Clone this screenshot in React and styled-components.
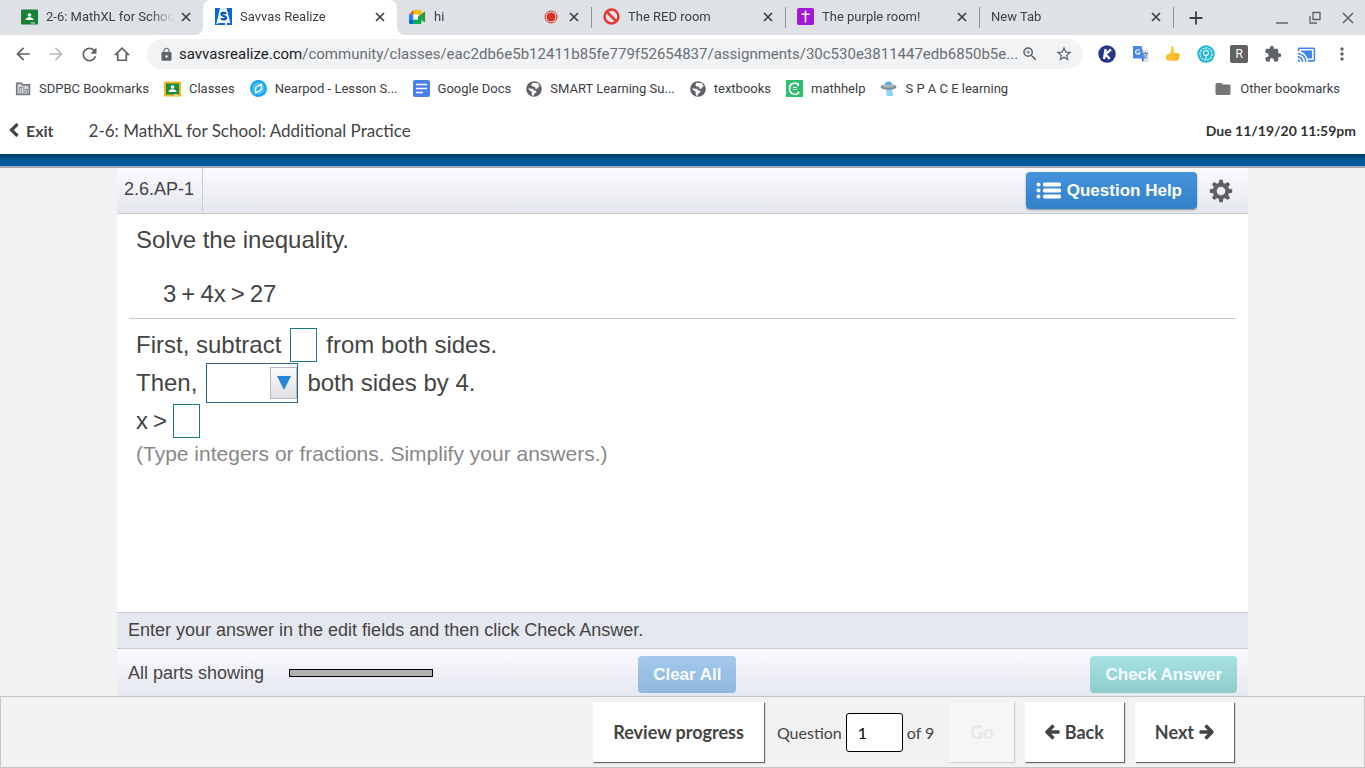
import React from "react";
// Style
import styled, { createGlobalStyle, css } from "styled-components";
// Icons
import {
  MdAdd,
  MdArrowBack,
  MdArrowForward,
  MdCastConnected,
  MdExtension,
  MdFolder,
  MdLock,
  MdMoreVert,
  MdRefresh,
  MdStarBorder,
  MdZoomIn,
} from "react-icons/md";

// Favicons
const ClassroomIcon = ({ frame = "#188038", board = "#188038" }) => (
  <svg width="17" height="16" viewBox="0 0 17 16" aria-hidden="true">
    <rect width="17" height="15" y="0.5" rx="1" fill={frame} />
    <rect x="2" y="2.5" width="13" height="11" fill={board} />
    <circle cx="8.5" cy="6" r="1.8" fill="#fff" />
    <path d="M4.5 11c0-2 2-2.8 4-2.8s4 .8 4 2.8z" fill="#fff" />
    <path d="M10 13.500h4v1h-4z" fill="#e8eaed" />
  </svg>
);

const SavvasIcon = () => (
  <svg width="17" height="17" viewBox="0 0 17 17" aria-hidden="true">
    <rect width="17" height="17" fill="#0b66d0" />
    <path d="M5 0h6.500l4 15H12v2H1z" fill="#e9f2fd" />
    <path d="M0 17l4-2h6v2z" fill="#0b66d0" />
    <path
      d="M11 5.800C9.600 4.500 6.400 4.600 6.500 6.500c.2 1.800 4.600 1.300 4.600 3.300 0 1.900-3.400 2.100-5.200.7"
      fill="none"
      stroke="#0a4fb0"
      strokeWidth="2.200"
    />
  </svg>
);

const MeetIcon = () => (
  <svg width="17" height="14" viewBox="0 0 17 14" aria-hidden="true">
    <path d="M4.500 0v4.500H0z" fill="#ea4335" />
    <path d="M0 4.500h4.500v5H0z" fill="#2684fc" />
    <path d="M0 9.500h4.500V14H1.500A1.500 1.500 0 0 1 0 12.500z" fill="#0066da" />
    <path d="M4.500 0H11a1.500 1.500 0 0 1 1.500 1.500V7L9 5V4.500H4.500z" fill="#ffba00" />
    <path d="M4.500 9.500H9V7l3.500-2v7.500A1.500 1.500 0 0 1 11 14H4.500z" fill="#00ac47" />
    <path d="M9 7l6.200-5.200c.4-.3.900 0 .9.500v9.400c0 .5-.5.800-.9.500z" fill="#2a9a45" />
    <path d="M4.500 4.500H9v5H4.500z" fill="#fff" />
  </svg>
);

const RecordIcon = () => (
  <svg width="22" height="14" viewBox="0 0 14 14" aria-hidden="true">
    <circle cx="7" cy="7" r="6" fill="none" stroke="#d93025" strokeWidth="1" />
    <circle cx="7" cy="7" r="4.500" fill="#d93025" />
  </svg>
);

const BannedIcon = () => (
  <svg width="17" height="17" viewBox="0 0 17 17" aria-hidden="true">
    <circle cx="8.500" cy="8.500" r="7" fill="#e8e0e2" stroke="#e53935" strokeWidth="2.500" />
    <path d="M3.500 3.500l10 10" stroke="#e53935" strokeWidth="2.500" />
  </svg>
);

const CrossIcon = () => (
  <svg width="17" height="17" viewBox="0 0 17 17" aria-hidden="true">
    <rect width="17" height="17" rx="2" fill="#a317d6" />
    <path d="M8.500 2.500v12M4.500 6.300h8" stroke="#fff" strokeWidth="1.600" />
  </svg>
);

const DistrictIcon = () => (
  <svg width="16" height="14" viewBox="0 0 16 14" aria-hidden="true">
    <path d="M1.700 1.200h4.500l1.500 1.700h6.800v9.600H1.700z" fill="#d0d2d5" stroke="#74777b" strokeWidth="1.600" />
    <path d="M4 5h4.500v6.500H4zM9.500 7H13v4.500H9.500z" fill="#8b8f93" />
    <path d="M5.300 6v5M7.300 6v5M11.200 8v3" stroke="#fff" strokeWidth=".8" />
  </svg>
);

const NearpodIcon = () => (
  <svg width="17" height="17" viewBox="0 0 17 17" aria-hidden="true">
    <circle cx="8.500" cy="8.500" r="8.500" fill="#16a8f0" />
    <circle cx="8.500" cy="8.500" r="6" fill="#4cc0f8" />
    <path
      d="M5.800 7.300L11.500 4l-.3 5.700-5.700 3.300z"
      fill="#2bb1f3"
      stroke="#fff"
      strokeWidth="1.300"
      strokeLinejoin="round"
    />
  </svg>
);

const DocsIcon = () => (
  <svg width="17" height="17" viewBox="0 0 17 17" aria-hidden="true">
    <rect width="17" height="17" rx="2" fill="#4a80ee" />
    <path d="M3 4.500h11M3 8.500h11M3 12.500h7" stroke="#fff" strokeWidth="1.700" />
  </svg>
);

const GlobeIcon = () => (
  <svg width="16" height="16" viewBox="0 0 16 16" aria-hidden="true">
    <circle cx="8" cy="8" r="7.800" fill="#5f6368" />
    <path d="M6.500 1.800L12 2.200l1.800 3.300-1.300.3-1 1.900-2.300-.3-.4-1.600-2.300-.2L5.300 4z" fill="#fff" />
    <path d="M1.700 7.500l5 .3 1.800 1.600 1.900.4-.2 1.700-1.800 1-.8 2.200-1.700-.3-.2-3.300z" fill="#fff" />
  </svg>
);

const MathHelpIcon = () => (
  <svg width="17" height="17" viewBox="0 0 17 17" aria-hidden="true">
    <rect width="17" height="17" fill="#2fc06e" />
    <path d="M12.500 5.500C11 1.800 3.500 2.500 3.500 8.500s7 7.500 9.700 3.500" fill="none" stroke="#fff" strokeWidth="1.700" />
    <path d="M7 7h4v1H7zM7 9h4v1H7zM12 3h1v3h-1z" fill="#fff" />
  </svg>
);

const SaucerIcon = () => (
  <svg width="17" height="16" viewBox="0 0 17 16" aria-hidden="true">
    <path d="M6 8h6l1 7H6.500z" fill="#8fd3f4" />
    <ellipse cx="8.500" cy="3.500" rx="3.500" ry="3" fill="#4fb3e0" />
    <ellipse cx="8.500" cy="6" rx="8" ry="2.700" fill="#7d8f99" />
    <ellipse cx="8.500" cy="5" rx="5.500" ry="1.500" fill="#a9bac4" />
  </svg>
);

// Extension icons
const KIcon = () => (
  <svg width="18" height="18" viewBox="0 0 18 18" aria-hidden="true">
    <circle cx="9" cy="9" r="8.700" fill="#26358c" />
    <path d="M7.700 4L6 14M13 4.300L7.500 9.500l4.300 4.300" fill="none" stroke="#fff" strokeWidth="2.400" />
  </svg>
);

const TranslateIcon = () => (
  <svg width="18" height="18" viewBox="0 0 18 18" aria-hidden="true">
    <path d="M8 5h8.500v12H11z" fill="#dfe3e8" />
    <path d="M1 1h8.500l3 12.500H1z" fill="#4a86e8" />
    <path d="M10.500 17l2-3.500H9.500z" fill="#3367d6" />
    <path d="M7.700 5.500a2.300 2.300 0 1 0 .3 2.500H5.800" fill="none" stroke="#fff" strokeWidth="1.100" />
    <path
      d="M11 8.500h5M13.500 7v1.500M15 8.500c-.4 2-1.600 3.500-3 4.500M12 10c.8 1.600 2 2.500 3.500 3"
      fill="none"
      stroke="#607d8b"
      strokeWidth="1"
    />
  </svg>
);

const ThumbIcon = () => (
  <svg width="16" height="18" viewBox="0 0 16 18" aria-hidden="true">
    <path
      d="M6.500 1.500c1.500-.6 2.400.5 2.300 2.200L8.600 8h4.600c1.200 0 1.700 1 1.300 1.900.4.700.3 1.400-.4 1.900.2.900-.1 1.400-.7 1.800.1 1.400-.6 2.100-1.800 2.100H5L1.500 15.200c-.8-1.500-.8-3.700 0-5.200 2.500-1 4.500-2.500 4.700-4.500z"
      fill="#fcc02e"
    />
    <path d="M10 10.300h4.200M10 12.700h3.800M10 15h3" stroke="#f0a01c" strokeWidth=".9" />
  </svg>
);

const RingsIcon = () => (
  <svg width="18" height="18" viewBox="0 0 18 18" aria-hidden="true">
    <circle cx="9" cy="9" r="8.700" fill="#1fb6d0" />
    <circle cx="9" cy="9" r="6" fill="none" stroke="#e4fafd" strokeWidth="1.300" strokeDasharray="2 1" />
    <circle cx="9" cy="8" r="2.500" fill="none" stroke="#e4fafd" strokeWidth="1.200" />
    <path d="M9 10v4" fill="none" stroke="#e4fafd" strokeWidth="1.200" />
  </svg>
);

const CloseIcon = () => (
  <svg width="16" height="16" viewBox="0 0 16 16" aria-hidden="true">
    <path d="M4 4l8 8M12 4l-8 8" stroke="currentColor" strokeWidth="1.700" />
  </svg>
);

const GearIcon = () => (
  <svg width="24" height="24" viewBox="0 0 24 24" aria-hidden="true">
    <g fill="#5f6063">
      {[0, 45, 90, 135, 180, 225, 270, 315].map((angle) => (
        <path key={angle} d="M10.300 0.800h3.400l.8 4.500H9.500z" transform={`rotate(${angle} 12 12)`} />
      ))}
    </g>
    <circle cx="12" cy="12" r="6.300" fill="none" stroke="#5f6063" strokeWidth="4" />
  </svg>
);

const ListIcon = () => (
  <svg width="26" height="17" viewBox="0 0 26 17" aria-hidden="true">
    <g fill="#fff">
      {[0, 6, 12].map((y) => (
        <React.Fragment key={y}>
          <circle cx="2.500" cy={y + 2.5} r="2" />
          <rect x="7" y={y + 0.5} width="18" height="4" rx="1.500" />
        </React.Fragment>
      ))}
    </g>
  </svg>
);

const ArrowIcon = ({ right }) => (
  <svg width="16" height="18" viewBox="0 0 16 18" aria-hidden="true">
    <path
      d={right ? "M1.500 9h12M7.500 2.500L14 9l-6.500 6.500" : "M14.500 9h-12M8.500 2.500L2 9l6.500 6.500"}
      fill="none"
      stroke="#444"
      strokeWidth="3.500"
      strokeLinejoin="round"
    />
  </svg>
);

// Data
const tabs = [
  { title: "2-6: MathXL for School", icon: <ClassroomIcon /> },
  { title: "Savvas Realize", icon: <SavvasIcon />, active: true },
  { title: "hi", icon: <MeetIcon />, recording: true },
  { title: "The RED room", icon: <BannedIcon />, divider: true },
  { title: "The purple room!", icon: <CrossIcon />, divider: true },
  { title: "New Tab", divider: true },
];

const bookmarks = [
  { name: "SDPBC Bookmarks", icon: <DistrictIcon /> },
  { name: "Classes", icon: <ClassroomIcon frame="#f2b91d" board="#1e8e3e" /> },
  { name: "Nearpod - Lesson S...", icon: <NearpodIcon /> },
  { name: "Google Docs", icon: <DocsIcon /> },
  { name: "SMART Learning Su...", icon: <GlobeIcon /> },
  { name: "textbooks", icon: <GlobeIcon /> },
  { name: "mathhelp", icon: <MathHelpIcon /> },
  { name: "S P A C E learning", icon: <SaucerIcon /> },
];

const Browser = () => (
  <BrowserChrome>
    <TabStrip>
      {tabs.map((tab) => (
        <Tab key={tab.title} $active={tab.active} $divider={tab.divider}>
          {tab.icon}
          <TabTitle $first={!tab.icon}>{tab.title}</TabTitle>
          {tab.recording && <RecordIcon />}
          <IconButton $size={16} $color="#3c4043" aria-label="Close tab">
            <CloseIcon />
          </IconButton>
        </Tab>
      ))}
      <NewTab>
        <IconButton $size={20} $color="#3c4043" aria-label="New tab">
          <MdAdd size={22} />
        </IconButton>
      </NewTab>
      <WindowControls>
        <IconButton $size={16} aria-label="Minimize">
          <svg width="14" height="14" viewBox="0 0 14 14">
            <path d="M1 12h12" stroke="#5f6368" strokeWidth="1.500" />
          </svg>
        </IconButton>
        <IconButton $size={16} aria-label="Restore">
          <svg width="14" height="14" viewBox="0 0 14 14" fill="none" stroke="#5f6368" strokeWidth="1.300">
            <path d="M5 1.500h7v7H5zM2 5v7h7" />
          </svg>
        </IconButton>
        <IconButton $size={16} aria-label="Close">
          <svg width="14" height="14" viewBox="0 0 14 14">
            <path d="M2 2l10 10M12 2L2 12" stroke="#5f6368" strokeWidth="1.500" />
          </svg>
        </IconButton>
      </WindowControls>
    </TabStrip>
    <Toolbar>
      <NavButtons>
        <IconButton $size={20} aria-label="Back">
          <MdArrowBack size={20} />
        </IconButton>
        <IconButton $size={20} $color="#babcbe" aria-label="Forward">
          <MdArrowForward size={20} />
        </IconButton>
        <IconButton $size={20} aria-label="Reload">
          <MdRefresh size={21} />
        </IconButton>
        <IconButton $size={20} aria-label="Home">
          <svg width="16" height="16" viewBox="0 0 18 18" fill="none" stroke="#5f6368" strokeWidth="1.900">
            <path d="M2 9.500l7-7 7 7h-2.200V16H4.200V9.500z" />
          </svg>
        </IconButton>
      </NavButtons>
      <AddressBar>
        <IconButton $size={22} aria-label="View site information">
          <MdLock size={15} />
        </IconButton>
        <Address>
          <b>savvasrealize.com</b>
          /community/classes/eac2db6e5b12411b85fe779f52654837/assignments/30c530e3811447edb6850b5e...
        </Address>
        <AddressActions>
          <IconButton $size={18} aria-label="Zoom">
            <MdZoomIn size={18} />
          </IconButton>
          <IconButton $size={18} aria-label="Bookmark this page">
            <MdStarBorder size={18} />
          </IconButton>
        </AddressActions>
      </AddressBar>
      <Extensions>
        <KIcon />
        <TranslateIcon />
        <ThumbIcon />
        <RingsIcon />
        <LetterBadge>R</LetterBadge>
        <MdExtension size={18} />
        <MdCastConnected size={19} color="#4285f4" />
        <MdMoreVert size={20} />
      </Extensions>
    </Toolbar>
    <Bookmarks>
      {bookmarks.map((bookmark) => (
        <Bookmark key={bookmark.name} href="#">
          {bookmark.icon}
          {bookmark.name}
        </Bookmark>
      ))}
      <Bookmark href="#" $last>
        <MdFolder size={18} />
        Other bookmarks
      </Bookmark>
    </Bookmarks>
  </BrowserChrome>
);

const Exercise = () => (
  <Panel>
    <PanelHeader>
      <ExerciseId>2.6.AP-1</ExerciseId>
      <HelpButton>
        <ListIcon />
        Question Help
      </HelpButton>
      <IconButton $size={24} aria-label="Settings">
        <GearIcon />
      </IconButton>
    </PanelHeader>
    <Problem>
      <p>Solve the inequality.</p>
      <Equation>
        <span>3</span>
        <span>+</span>
        <span>4x</span>
        <span>&gt;</span>
        <span>27</span>
      </Equation>
    </Problem>
    <Steps>
      <Step>
        <label htmlFor="subtract">First, subtract</label>
        <AnswerBox id="subtract" />
        <span>from both sides.</span>
      </Step>
      <Step>
        <label htmlFor="operation">Then,</label>
        <SelectWrap>
          <select id="operation" defaultValue="">
            <option value=""></option>
            <option value="divide">divide</option>
            <option value="multiply">multiply</option>
          </select>
          <SelectArrow>
            <svg width="14" height="14" viewBox="0 0 14 14">
              <path d="M0 0h14L7 14z" fill="#2585d6" />
            </svg>
          </SelectArrow>
        </SelectWrap>
        <span>both sides by 4.</span>
      </Step>
      <Step $tight>
        <Inequality htmlFor="solution">
          <span>x</span>
          <span>&gt;</span>
        </Inequality>
        <AnswerBox id="solution" />
      </Step>
      <Hint>(Type integers or fractions. Simplify your answers.)</Hint>
    </Steps>
    <Instruction>Enter your answer in the edit fields and then click Check Answer.</Instruction>
    <PanelFooter>
      <Parts>
        All parts showing
        <Progress />
      </Parts>
      <ActionButton>Clear All</ActionButton>
      <ActionButton $teal>Check Answer</ActionButton>
    </PanelFooter>
  </Panel>
);

const App = () => (
  <Page>
    <GlobalStyle />
    <Browser />
    <AssignmentHeader>
      <ExitLink href="#">
        <svg width="10" height="14" viewBox="0 0 10 14" aria-hidden="true">
          <path d="M8.500 1L2.500 7l6 6" fill="none" stroke="#444" strokeWidth="3.200" />
        </svg>
        Exit
      </ExitLink>
      <AssignmentTitle>2-6: MathXL for School: Additional Practice</AssignmentTitle>
      <DueDate>Due 11/19/20 11:59pm</DueDate>
    </AssignmentHeader>
    <BlueBar />
    <Exercise />
    <Pager>
      <PagerButton>Review progress</PagerButton>
      <PageSelect>
        <label htmlFor="question">Question</label>
        <input id="question" defaultValue="1" />
        <span>of 9</span>
      </PageSelect>
      <PagerButton disabled>Go</PagerButton>
      <PagerButton>
        <ArrowIcon />
        Back
      </PagerButton>
      <PagerButton>
        Next
        <ArrowIcon right />
      </PagerButton>
    </Pager>
  </Page>
);

const GlobalStyle = createGlobalStyle`
  * {
    box-sizing: border-box;
    margin: 0;
    padding: 0;
  }
  body {
    background: #f2f2f2;
    font-family: "Liberation Sans", Arial, sans-serif;
    color: #444;
  }
  button, input, select {
    font-family: inherit;
  }
  svg {
    flex-shrink: 0;
  }
`;

const Page = styled.div`
  display: flex;
  flex-direction: column;
  min-height: 100vh;
`;

const IconButton = styled.button`
  display: flex;
  align-items: center;
  justify-content: center;
  flex-shrink: 0;
  width: ${(props) => props.$size}px;
  height: ${(props) => props.$size}px;
  border: none;
  background: transparent;
  color: ${(props) => props.$color || "#5f6368"};
  cursor: pointer;
`;

const BrowserChrome = styled.div`
  background: #fff;
  font-family: Roboto, sans-serif;
  color: #5f6368;
`;

const TabStrip = styled.div`
  display: flex;
  height: 35px;
  padding-left: 9px;
  background: #dee1e6;
`;

const activeTab = css`
  background: #fff;

  &::before,
  &::after {
    content: "";
    position: absolute;
    bottom: 0;
    width: 8px;
    height: 8px;
  }
  &::before {
    left: -8px;
    background: radial-gradient(circle at 0 0, transparent 8px, #fff 8px);
  }
  &::after {
    right: -8px;
    background: radial-gradient(circle at 100% 0, transparent 8px, #fff 8px);
  }
`;

const tabDivider = css`
  &::before {
    content: "";
    position: absolute;
    left: 0;
    top: 7px;
    width: 1px;
    height: 21px;
    background: #8f9398;
  }
`;

const Tab = styled.div`
  display: flex;
  align-items: center;
  gap: 4px;
  flex: 0 1 194px;
  min-width: 0;
  padding: 0 9px 2px 12px;
  position: relative;
  border-radius: 8px 8px 0 0;
  ${(props) => props.$active && activeTab}
  ${(props) => props.$divider && tabDivider}
`;

const TabTitle = styled.span`
  flex: 1;
  min-width: 0;
  margin-left: ${(props) => (props.$first ? "0" : "4px")};
  overflow: hidden;
  white-space: nowrap;
  font-size: 13px;
  color: #3c4043;
  mask-image: linear-gradient(to left, transparent, #000 24px);
`;

const NewTab = styled.div`
  display: flex;
  align-items: center;
  height: 21px;
  margin-top: 7px;
  padding-left: 12px;
  border-left: 1px solid #8f9398;
`;

const WindowControls = styled.div`
  display: flex;
  align-items: center;
  gap: 17px;
  margin-left: auto;
  padding-right: 9px;
`;

const Toolbar = styled.div`
  display: flex;
  align-items: center;
  height: 38px;
  padding: 0 13px;
`;

const NavButtons = styled.div`
  display: flex;
  gap: 13px;
  margin-right: 15px;
`;

const AddressBar = styled.div`
  display: flex;
  align-items: center;
  flex: 1;
  gap: 2px;
  min-width: 0;
  height: 30px;
  padding: 0 10px 0 8px;
  border-radius: 15px;
  background: #f1f3f4;
`;

const Address = styled.span`
  flex: 1;
  min-width: 0;
  overflow: hidden;
  white-space: nowrap;
  font-size: 15px;
  color: #6b6f74;

  b {
    font-weight: 400;
    color: #202124;
  }
`;

const AddressActions = styled.div`
  display: flex;
  gap: 16px;
`;

const Extensions = styled.div`
  display: flex;
  align-items: center;
  justify-content: space-between;
  width: 254px;
  margin-left: 15px;
`;

const LetterBadge = styled.span`
  width: 18px;
  height: 18px;
  border-radius: 2px;
  background: #616161;
  color: #fff;
  font-size: 12px;
  line-height: 18px;
  text-align: center;
`;

const Bookmarks = styled.div`
  display: flex;
  align-items: center;
  gap: 15px;
  height: 31px;
  padding: 0 25px 0 15px;
`;

const Bookmark = styled.a`
  display: flex;
  align-items: center;
  gap: 8px;
  margin-left: ${(props) => (props.$last ? "auto" : "0")};
  font-size: 13px;
  white-space: nowrap;
  text-decoration: none;
  color: #3c4043;

  svg {
    color: #757575;
  }
`;

const AssignmentHeader = styled.header`
  display: flex;
  align-items: center;
  height: 50px;
  padding: 2px 9px 0;
  background: #fff;
  font-family: Lato, sans-serif;
`;

const ExitLink = styled.a`
  display: flex;
  align-items: center;
  gap: 7px;
  margin-right: 35px;
  font-size: 16px;
  font-weight: 700;
  text-decoration: none;
  color: #444;
`;

const AssignmentTitle = styled.h1`
  font-size: 17px;
  font-weight: 400;
`;

const DueDate = styled.span`
  margin-left: auto;
  font-size: 14px;
  font-weight: 700;
  color: #333;
`;

const BlueBar = styled.div`
  height: 14px;
  border-bottom: 2px solid #a5a9ae;
  background: linear-gradient(#003c60, #005a9c 50%);
`;

const Panel = styled.main`
  display: flex;
  flex-direction: column;
  flex: 1;
  margin: 0 117px;
  background: #fff;
`;

const PanelHeader = styled.div`
  display: flex;
  align-items: center;
  height: 46px;
  padding-right: 15px;
  border-bottom: 1px solid #c9cbd1;
  background: linear-gradient(#fafaff, #e6e8ef);
`;

const ExerciseId = styled.h2`
  align-self: flex-start;
  padding: 0 8px 0 7px;
  border-right: 1px solid #c9cbd1;
  font-size: 18px;
  font-weight: 400;
  line-height: 43px;
`;

const HelpButton = styled.button`
  display: flex;
  align-items: center;
  gap: 5px;
  height: 37px;
  margin: 0 12px 0 auto;
  padding: 0 15px 0 10px;
  border: none;
  border-radius: 4px;
  background: linear-gradient(#4593dc, #3280c8);
  box-shadow: 0 1px 2px rgba(0, 0, 0, 0.4);
  color: #fff;
  font-size: 17px;
  font-weight: 700;
`;

const Problem = styled.section`
  margin: 0 12px;
  padding: 11px 7px 9px;
  border-bottom: 1px solid #c8c8c8;
  font-size: 24px;
  line-height: 30px;
`;

const Equation = styled.p`
  display: flex;
  gap: 5px;
  margin-top: 24px;
  padding-left: 27px;
`;

const Steps = styled.section`
  display: flex;
  flex-direction: column;
  gap: 1px;
  flex: 1;
  padding: 9px 19px;
`;

const Step = styled.div`
  display: flex;
  align-items: center;
  gap: ${(props) => (props.$tight ? "6px" : "9px")};
  font-size: 24px;
  line-height: 30px;
`;

const AnswerBox = styled.input`
  width: 27px;
  height: 34px;
  border: 1px solid #1c7a80;
  background: #fff;
  font-size: 20px;
  text-align: center;
`;

const SelectWrap = styled.div`
  position: relative;

  select {
    display: block;
    width: 92px;
    height: 40px;
    padding-left: 6px;
    border: 1px solid #2f6290;
    border-radius: 0;
    background: #fff;
    appearance: none;
    font-size: 20px;
  }
`;

const SelectArrow = styled.span`
  position: absolute;
  top: 4px;
  right: 1px;
  display: flex;
  align-items: center;
  justify-content: center;
  width: 27px;
  height: 32px;
  border: 1px solid #b5b7bc;
  background: linear-gradient(#fbfbfb, #dfe0e3);
  pointer-events: none;
`;

const Inequality = styled.label`
  display: flex;
  gap: 5px;
`;

const Hint = styled.p`
  color: #888;
  font-size: 21px;
  line-height: 30px;
`;

const Instruction = styled.p`
  padding-left: 11px;
  border-top: 1px solid #c9cbd1;
  border-bottom: 1px solid #c9cbd1;
  background: #e6e8f0;
  font-size: 18px;
  line-height: 35px;
`;

const PanelFooter = styled.div`
  display: grid;
  grid-template-columns: 46% auto 1fr;
  align-items: center;
  height: 47px;
  padding: 4px 11px 0;
  background: linear-gradient(#fafaff, #e6e8f0);

  button:last-child {
    justify-self: end;
  }
`;

const Parts = styled.div`
  display: flex;
  align-items: center;
  gap: 25px;
  padding-bottom: 3px;
  font-size: 18px;
`;

const Progress = styled.div`
  width: 144px;
  height: 8px;
  border: 1px solid #000;
  background: #b0b0b0;
`;

const ActionButton = styled.button`
  height: 37px;
  padding: 0 15px;
  border: none;
  border-radius: 4px;
  background: ${(props) =>
    props.$teal ? "linear-gradient(#a8e2e2, #90cccc)" : "linear-gradient(#a4c8ec, #8fb8de)"};
  color: #f4fbff;
  font-size: 17px;
  font-weight: 700;
`;

const Pager = styled.footer`
  display: flex;
  align-items: center;
  justify-content: flex-end;
  gap: 11px;
  height: 72px;
  padding-right: 130px;
  border: 1px solid #c4c4c4;
  background: #f2f2f2;
  font-family: Lato, sans-serif;
`;

const PagerButton = styled.button`
  display: flex;
  align-items: center;
  justify-content: center;
  gap: 4px;
  height: 60px;
  padding: 0 20px;
  border: none;
  background: #fff;
  box-shadow: 1px 1px 1px #666;
  color: #444;
  font-size: 18px;
  font-weight: 700;

  &:disabled {
    background: #f6f6f6;
    box-shadow: 1px 1px 1px #ccc;
    color: #e8e8e8;
  }
`;

const PageSelect = styled.div`
  display: flex;
  align-items: center;
  gap: 4px;
  padding: 0 5px 0 2px;
  font-size: 16px;

  input {
    width: 57px;
    height: 39px;
    padding-left: 11px;
    border: 1px solid #000;
    border-radius: 3px;
    background: #fff;
    font-size: 16px;
  }
`;

export default App;
